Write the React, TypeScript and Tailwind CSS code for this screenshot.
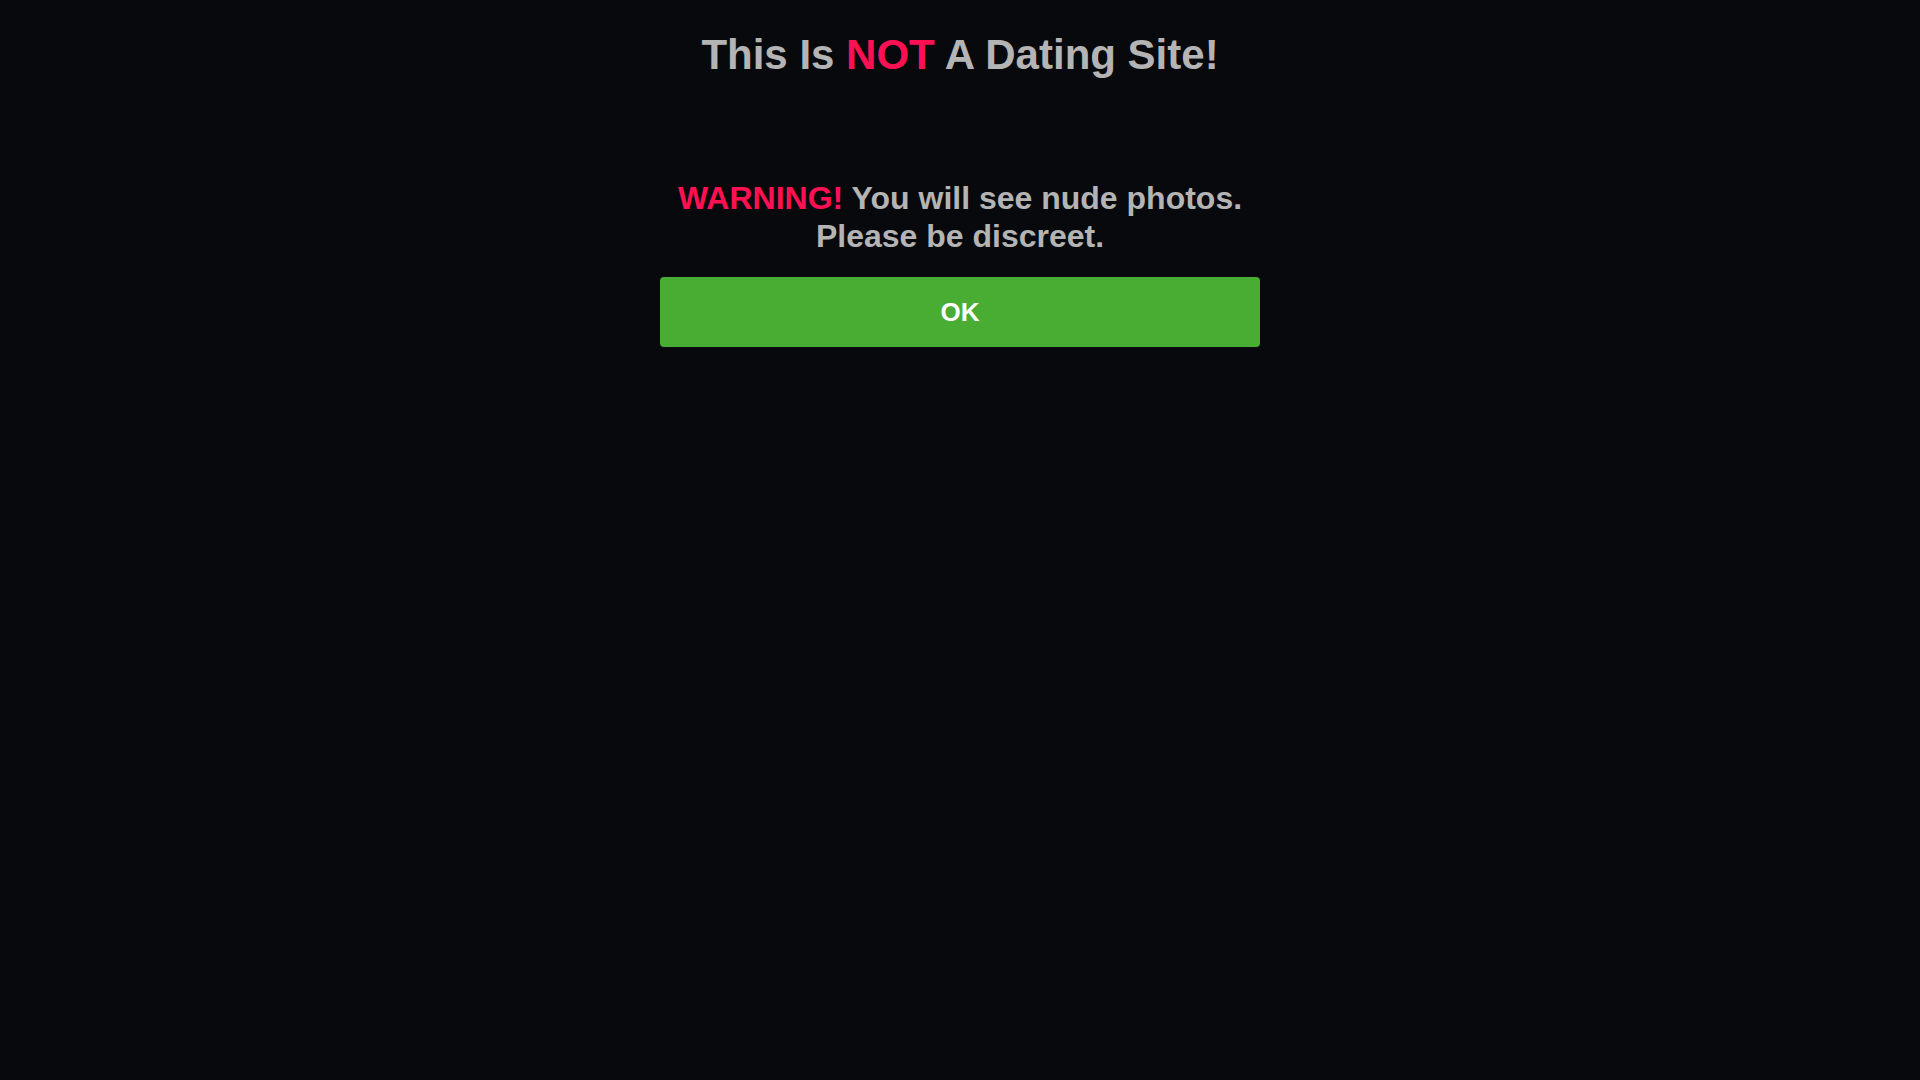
import React from "react";

export default function App() {
  return (
    <div
      className="min-h-screen w-full bg-[#07090d] flex flex-col items-center pt-[31px]"
      style={{ fontFamily: '"Liberation Sans", Arial, sans-serif' }}
    >
      <h1 className="text-[42px] leading-[48px] font-bold text-[#b4b4b4] text-center">
        This Is <span className="text-[#ff1053]">NOT</span> A Dating Site!
      </h1>
      <p className="mt-[100px] text-[32px] leading-[1.2] font-bold text-[#b4b4b4] text-center">
        <span className="text-[#ff1053]">WARNING!</span> You will see nude photos.
        <br />
        Please be discreet.
      </p>
      <button className="mt-[21px] w-[600px] h-[70px] rounded-[4px] bg-[#49ac33] text-white text-[26px] leading-[70px] font-bold text-center">
        OK
      </button>
    </div>
  );
}
